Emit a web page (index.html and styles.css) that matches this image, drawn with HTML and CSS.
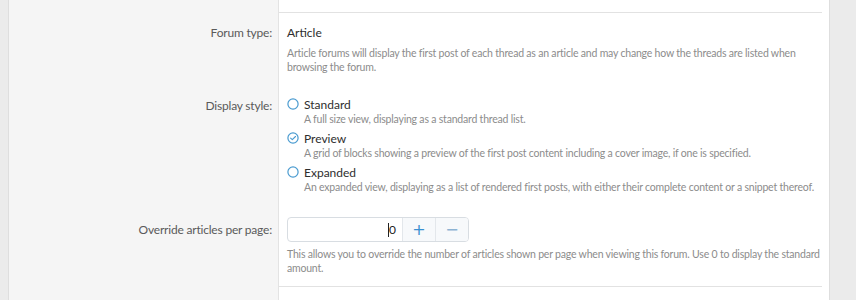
FILE: index.html
```html
<!DOCTYPE html>
<html>
<head>
<meta charset="utf-8">
<link rel="stylesheet" href="styles.css">
</head>
<body>
<div class="page">
  <div class="gutter"></div>
  <div class="form">
    <div class="top">
      <div class="top-label"></div>
      <div class="top-content"></div>
    </div>
    <div class="row row-first">
      <div class="label"><span class="label-text">Forum type:</span></div>
      <div class="content">
        <div class="value">Article</div>
        <div class="hint">Article forums will display the first post of each thread as an article and may change how the threads are listed when browsing the forum.</div>
      </div>
    </div>
    <div class="row row-mid">
      <div class="label"><span class="label-text">Display style:</span></div>
      <div class="content">
        <ul class="options">
          <li class="option">
            <div class="opt-line">
              <svg class="radio" viewBox="0 0 12 12"><circle cx="6" cy="6" r="5.1" fill="none" stroke="#4a9bd0" stroke-width="1.2"/></svg>
              <span class="opt-label">Standard</span>
            </div>
            <div class="opt-hint">A full size view, displaying as a standard thread list.</div>
          </li>
          <li class="option">
            <div class="opt-line">
              <svg class="radio" viewBox="0 0 12 12"><circle cx="6" cy="6" r="5.1" fill="none" stroke="#4a9bd0" stroke-width="1.2"/><path d="M3.6 6.1 L5.3 7.7 L8.5 4.5" fill="none" stroke="#4a9bd0" stroke-width="1.1" stroke-linecap="round" stroke-linejoin="round"/></svg>
              <span class="opt-label">Preview</span>
            </div>
            <div class="opt-hint">A grid of blocks showing a preview of the first post content including a cover image, if one is specified.</div>
          </li>
          <li class="option">
            <div class="opt-line">
              <svg class="radio" viewBox="0 0 12 12"><circle cx="6" cy="6" r="5.1" fill="none" stroke="#4a9bd0" stroke-width="1.2"/></svg>
              <span class="opt-label">Expanded</span>
            </div>
            <div class="opt-hint">An expanded view, displaying as a list of rendered first posts, with either their complete content or a snippet thereof.</div>
          </li>
        </ul>
      </div>
    </div>
    <div class="row row-last">
      <div class="label label-input"><span class="label-text">Override articles per page:</span></div>
      <div class="content">
        <div class="number">
          <div class="number-field"><span class="caret"></span>0</div>
          <button class="step step-up">+</button>
          <button class="step step-down">&minus;</button>
        </div>
        <div class="hint hint-input">This allows you to override the number of articles shown per page when viewing this forum. Use 0 to display the standard amount.</div>
      </div>
    </div>
  </div>
  <div class="side"></div>
</div>
</body>
</html>
```

FILE: styles.css
```css
* { box-sizing: border-box; }
html, body { margin: 0; padding: 0; }
body {
  background: #ebebeb;
  font-family: Lato, "Noto Sans", sans-serif;
  width: 856px;
}
.page {
  display: flex;
  height: 300px;
}
.gutter {
  width: 9px;
  flex: none;
  background: #ebebeb;
  border-right: 1px solid #dedede;
}
.form {
  width: 820px;
  flex: none;
  display: flex;
  flex-direction: column;
  background: linear-gradient(to right, #f5f5f5 0, #f5f5f5 269px, #e3e3e3 269px, #e3e3e3 270px, #ffffff 270px);
}
.side {
  flex: 1;
  background: #ebebeb;
  border-left: 1px solid #dedede;
}
.top {
  display: flex;
  height: 13px;
  flex: none;
}
.top-label { width: 270px; }
.top-content {
  flex: 1;
  margin-right: 7px;
  border-bottom: 1px solid #e2e2e2;
}
.row {
  display: flex;
  flex: none;
}
.label {
  width: 270px;
  flex: none;
  text-align: right;
  padding-right: 7px;
  font-size: 12px;
  letter-spacing: -0.2px;
  line-height: 18px;
  color: #5a5a5a;
}
.content {
  flex: 1;
  padding-left: 8px;
  padding-right: 2px;
  margin-right: 7px;
}
.row-first { padding-top: 11px; padding-bottom: 22px; }
.value {
  font-size: 12px;
  line-height: 18px;
  color: #2e2e2e;
  margin-bottom: 4px;
}
.hint {
  font-size: 10.5px;
  letter-spacing: -0.2px;
  line-height: 14px;
  color: #8c8c8c;
}
.row-mid .label { padding-top: 1px; }
.options {
  list-style: none;
  margin: 0;
  padding: 0;
}
.option + .option { margin-top: 4px; }
.opt-line {
  display: flex;
  align-items: center;
  height: 16px;
}
.radio {
  width: 12px;
  height: 12px;
  margin-right: 5px;
  flex: none;
}
.opt-label {
  font-size: 12px;
  color: #2e2e2e;
}
.opt-hint {
  padding-left: 17px;
  font-size: 10.5px;
  letter-spacing: -0.2px;
  line-height: 14px;
  color: #8c8c8c;
}
.row-last {
  padding-top: 23px;
}
.row-last .content {
  border-bottom: 1px solid #e2e2e2;
  padding-bottom: 11px;
}
.label-input { padding-top: 4px; }
.number {
  display: flex;
  width: 182px;
  height: 25px;
  border: 1px solid #d8dde2;
  border-radius: 4px;
  overflow: hidden;
  margin-bottom: 5px;
  background: #fff;
}
.number-field {
  width: 114px;
  flex: none;
  text-align: right;
  padding-right: 6px;
  font-size: 12px;
  line-height: 23px;
  color: #1d1d1d;
}
.caret {
  display: inline-block;
  width: 1px;
  height: 14px;
  background: #222;
  vertical-align: -3px;
}
.step {
  flex: 1;
  border: 0;
  border-left: 1px solid #e3e7eb;
  background: #f7f9fb;
  font-family: "DejaVu Sans", sans-serif;
  font-size: 16px;
  line-height: 23px;
  padding: 0;
  margin: 0;
  font-weight: normal;
}
.step-up { color: #3a8fd1; }
.step-down { color: #8db3d3; }
```
